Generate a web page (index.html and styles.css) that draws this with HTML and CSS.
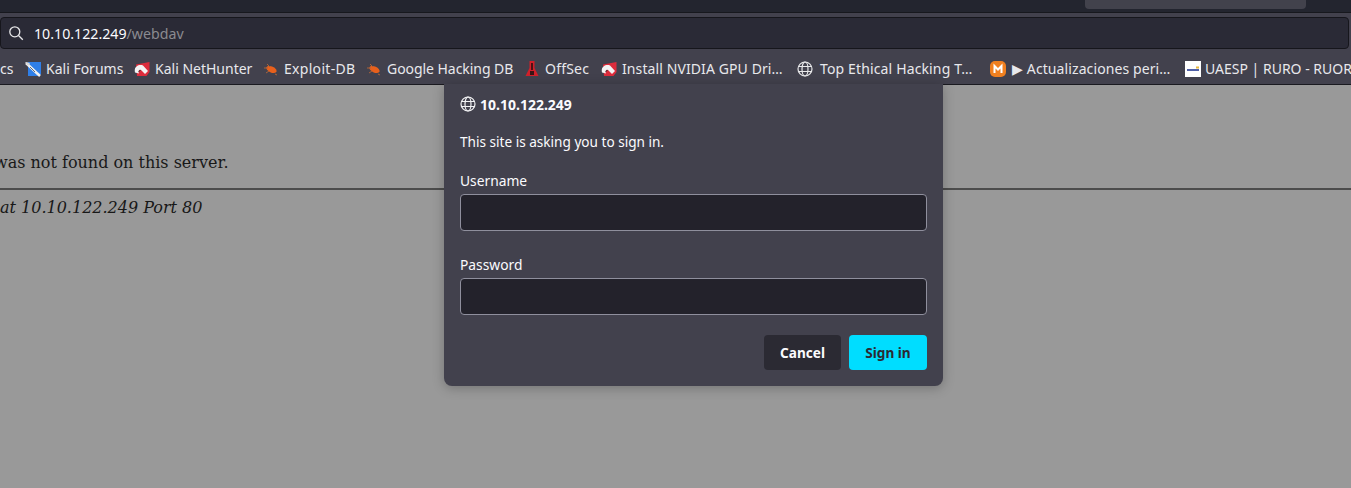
FILE: index.html
```html
<!DOCTYPE html>
<html lang="en">
<head>
<meta charset="utf-8">
<title>10.10.122.249/webdav</title>
<link rel="stylesheet" href="styles.css">
</head>
<body>
<header class="chrome">
  <div class="tabstrip"><div class="tab-active"></div></div>
  <div class="toolbar">
    <div class="urlbar">
      <svg class="search" width="16" height="16" viewBox="0 0 16 16" fill="none" stroke="#e8e8ea" stroke-width="1.3"><circle cx="6.8" cy="6.8" r="5"/><path d="M10.5 10.5l4.3 4.3"/></svg>
      <span class="host">10.10.122.249</span><span class="path">/webdav</span>
    </div>
  </div>
  <nav class="bookmarks">
    <span class="bm bm-first">cs</span>
    <span class="bm w-forums"><svg class="ico" viewBox="0 0 16 16"><path d="M3 1h13v12l-2 2H3z" fill="#2f7fe8"/><path d="M1 2l14 13" stroke="#f0f0f0" stroke-width="2.6"/><path d="M0 1l5 1-2 3z" fill="#d8d8d8"/><path d="M5 6l5 5" stroke="#5a6a80" stroke-width="1"/></svg>Kali Forums</span>
    <span class="bm w-net"><svg class="ico" viewBox="0 0 16 16"><path d="M2 3.500L15.500 1v10l-3 4H3z" fill="#dc2c3c"/><path d="M1 11.500C-.5 5.500 5 3 9 4.500l5 5.500-3 3-4-4C5 8 4 10 5 12.500z" fill="#f4f4f4"/><path d="M6.500 9.500C5.500 9 5 10 5 11" stroke="#333" fill="none"/></svg>Kali NetHunter</span>
    <span class="bm w-edb"><svg class="ico" viewBox="0 0 16 16"><ellipse cx="8.500" cy="8.500" rx="5.500" ry="3" fill="#e8601c" transform="rotate(25 8.500 8.500)"/><path d="M1 7l4 0M4 3l3 3M3 12l3-2M12 13l2 1" stroke="#a8623a"/></svg>Exploit-DB</span>
    <span class="bm w-ghdb"><svg class="ico" viewBox="0 0 16 16"><ellipse cx="8.500" cy="8.500" rx="5.500" ry="3" fill="#e8601c" transform="rotate(25 8.500 8.500)"/><path d="M1 7l4 0M4 3l3 3M3 12l3-2M12 13l2 1" stroke="#a8623a"/></svg>Google Hacking DB</span>
    <span class="bm w-off"><svg class="ico" viewBox="0 0 16 16"><path d="M5.500 0h5v7l4 8h-13l4-8z" fill="#d0202a"/><path d="M8 2v7" stroke="#2a1010" stroke-width="1.600"/><path d="M6 10h4v4H6z" fill="#3a1414"/></svg>OffSec</span>
    <span class="bm w-nvidia"><svg class="ico" viewBox="0 0 16 16"><path d="M2 3.500L15.500 1v10l-3 4H3z" fill="#dc2c3c"/><path d="M1 11.500C-.5 5.500 5 3 9 4.500l5 5.500-3 3-4-4C5 8 4 10 5 12.500z" fill="#f4f4f4"/><path d="M6.500 9.500C5.500 9 5 10 5 11" stroke="#333" fill="none"/></svg>Install NVIDIA GPU Dri…</span>
    <span class="bm w-top"><svg class="ico ico-top" viewBox="0 0 16 16" fill="none" stroke="#e8e8ea" stroke-width="1.200"><circle cx="8" cy="8" r="7"/><ellipse cx="8" cy="8" rx="3" ry="7"/><path d="M1.500 5.500h13M1.500 10.500h13"/></svg>Top Ethical Hacking T…</span>
    <span class="bm w-act"><svg class="ico ico-act" viewBox="0 0 16 16"><rect width="16" height="16" rx="5" fill="#f08020"/><path d="M4.500 12V5L8 8.500 11.500 5v7" fill="none" stroke="#fff" stroke-width="2"/></svg>▶ Actualizaciones peri…</span>
    <span class="bm w-uaesp"><svg class="ico ico-uaesp" viewBox="0 0 16 16"><rect width="16" height="16" fill="#fff"/><rect x="2" y="8" width="12" height="2" fill="#5060a8"/><rect x="11" y="5.500" width="3" height="2" fill="#e8b840"/></svg>UAESP | RURO - RUOR</span>
  </nav>
</header>
<main class="page">
  <p class="message">was not found on this server.</p>
  <hr class="rule">
  <address class="sig">at 10.10.122.249 Port 80</address>
</main>
<section class="dialog">
  <div class="origin">
    <svg width="16" height="16" viewBox="0 0 16 16" fill="none" stroke="#f2f2f4" stroke-width="1.200"><circle cx="8" cy="8" r="7"/><ellipse cx="8" cy="8" rx="3" ry="7"/><path d="M1.500 5.500h13M1.500 10.500h13"/></svg>
    <span>10.10.122.249</span>
  </div>
  <p class="ask">This site is asking you to sign in.</p>
  <label class="lbl">Username</label>
  <div class="field"></div>
  <label class="lbl lbl-pass">Password</label>
  <div class="field"></div>
  <div class="actions">
    <button class="btn btn-cancel">Cancel</button>
    <button class="btn btn-sign">Sign in</button>
  </div>
</section>
</body>
</html>
```
FILE: styles.css
```css
* { box-sizing: border-box; }
html, body { margin: 0; height: 100%; overflow: hidden; }
body { background: #999999; font-family: "Noto Sans", sans-serif; position: relative; width: 1351px; height: 488px; }
.chrome { height: 85px; display: flex; flex-direction: column; border-bottom: 1px solid #1a1a20; }
.tabstrip { height: 13px; background: #23252f; border-bottom: 1px solid #17181e; display: flex; justify-content: flex-end; padding-right: 45px; flex: none; }
.tab-active { width: 221px; height: 9px; background: #42424c; border-radius: 0 0 4px 4px; }
.toolbar { height: 36px; background: #42414d; padding: 4px 2px 0 0; flex: none; }
.urlbar { height: 32px; background: #2a2a36; border: 1px solid #16161c; border-radius: 4px; display: flex; align-items: center; padding-left: 7px; font-size: 14.2px; }
.search { margin-right: 10px; flex: none; }
.host { color: #fbfbfe; }
.path { color: #8a8a90; }
.bookmarks { flex: 1; background: #42414d; display: flex; align-items: center; padding-top: 4px; color: #e8e8ec; font-size: 14px; white-space: nowrap; overflow: hidden; }
.bm { display: flex; align-items: center; flex: none; }
.ico { width: 16px; height: 16px; margin-right: 5px; flex: none; }
.ico-top { margin-right: 7px; }
.ico-act { margin-right: 6px; }
.ico-uaesp { margin-right: 4px; }
.bm-first { width: 25px; }
.w-forums { width: 109px; }
.w-net { width: 129px; }
.w-edb { width: 103px; letter-spacing: .3px; }
.w-ghdb { width: 158px; letter-spacing: -.05px; }
.w-off { width: 77px; letter-spacing: .2px; }
.w-nvidia { width: 196px; letter-spacing: .1px; }
.w-top { width: 193px; letter-spacing: .14px; }
.w-act { width: 195px; letter-spacing: .1px; }
.w-uaesp { width: 170px; }
.page { font-family: "DejaVu Serif", serif; font-size: 16px; color: #181818; }
.message { margin: 68px 0 0 -6px; line-height: 19px; }
.rule { margin: 16px 0 0; border: 0; border-top: 2px solid #4c4c4c; height: 2px; }
.sig { margin-top: 8px; line-height: 19px; font-style: italic; }
.dialog { position: absolute; left: 444px; top: 84px; width: 499px; height: 302px; background: #42414d; border-radius: 0 0 8px 8px; box-shadow: 0 2px 12px rgba(0,0,0,.25); padding: 0 16px; color: #fbfbfe; }
.origin { display: flex; align-items: center; gap: 4px; height: 20px; margin-top: 10px; font-weight: 700; font-size: 14px; }
.ask { margin: 18px 0 0; font-size: 13.6px; line-height: 20px; }
.lbl { display: block; margin-top: 20px; font-size: 13.8px; line-height: 18px; }
.lbl-pass { margin-top: 25px; }
.field { height: 37px; margin-top: 4px; background: #23222b; border: 1px solid #8f8f9d; border-radius: 4px; }
.actions { display: flex; justify-content: flex-end; gap: 8px; margin-top: 20px; }
.btn { height: 35px; border: 0; border-radius: 4px; font: 700 13.6px "Noto Sans", sans-serif; padding: 0; }
.btn-cancel { width: 77px; background: #2b2a33; color: #fbfbfe; }
.btn-sign { width: 78px; background: #00ddff; color: #2b2a33; }
```
